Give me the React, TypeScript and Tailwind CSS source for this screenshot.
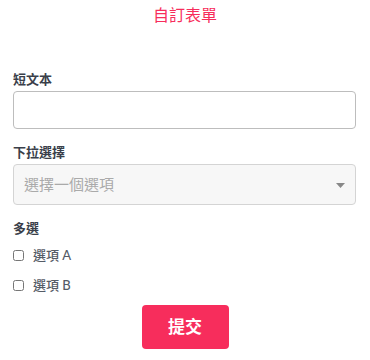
const App = () => {
  return (
    <div className="w-[370px] h-[360px] bg-white px-[13px] font-['Lato','Noto_Sans_CJK_TC',sans-serif]">
      {/* title */}
      <h1 className="pt-[5px] text-center text-[16px] leading-[20px] text-[#f72d5c] font-normal">
        自訂表單
      </h1>

      <form className="mt-[45px] flex flex-col">
        <label className="text-[13px] leading-[18px] font-bold text-[#3a3f4a]">短文本</label>
        <input
          type="text"
          className="mt-[3px] h-[38px] w-[343px] rounded-[4px] border border-[#bdbdbd] bg-white px-3 outline-none"
        />

        <label className="mt-[14px] text-[13px] leading-[18px] font-bold text-[#3a3f4a]">下拉選擇</label>
        <div className="mt-[3px] relative h-[41px] w-[343px] rounded-[4px] border border-[#d4d4d4] bg-[#f7f7f7] flex items-center">
          <span className="pl-[10px] text-[15px] text-[#aaaaaa]">選擇一個選項</span>
          <svg className="absolute right-[10px] top-[18px]" width="9" height="5" viewBox="0 0 9 5">
            <path d="M0 0 L9 0 L4.5 5 Z" fill="#888" />
          </svg>
        </div>

        <label className="mt-[14px] text-[13px] leading-[18px] font-bold text-[#3a3f4a]">多選</label>
        <div className="mt-[10px] flex flex-col gap-[13px]">
          <label className="flex items-center h-[17px]">
            <input type="checkbox" className="w-[11px] h-[11px] m-0" />
            <span className="ml-[9px] text-[13px] font-medium text-[#555b66]">選項 A</span>
          </label>
          <label className="flex items-center h-[17px]">
            <input type="checkbox" className="w-[11px] h-[11px] m-0" />
            <span className="ml-[9px] text-[13px] font-medium text-[#555b66]">選項 B</span>
          </label>
        </div>

        <div className="mt-[11px] flex justify-center">
          <button
            type="button"
            className="w-[87px] h-[44px] rounded-[4px] bg-[#f72d5c] text-white text-[17px] font-bold"
          >
            提交
          </button>
        </div>
      </form>
    </div>
  )
}

export default App
